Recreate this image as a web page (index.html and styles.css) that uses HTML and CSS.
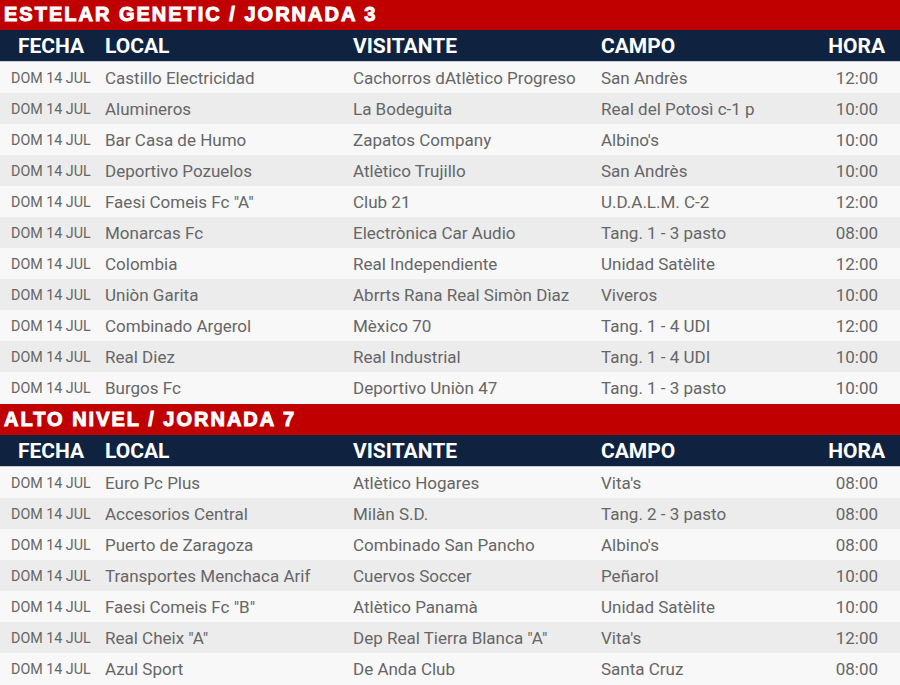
FILE: index.html
```html
<!DOCTYPE html>
<html lang="es">
<head>
<meta charset="utf-8">
<title>Jornadas</title>
<link rel="stylesheet" href="styles.css">
</head>
<body>
<section class="block">
  <h2 class="title">ESTELAR GENETIC / JORNADA 3</h2>
  <div class="row head"><span class="c1">FECHA</span><span>LOCAL</span><span>VISITANTE</span><span>CAMPO</span><span class="c5">HORA</span></div>
  <div class="row"><span class="c1">DOM 14 JUL</span><span>Castillo Electricidad</span><span>Cachorros dAtlètico Progreso</span><span>San Andrès</span><span class="c5">12:00</span></div>
  <div class="row"><span class="c1">DOM 14 JUL</span><span>Alumineros</span><span>La Bodeguita</span><span>Real del Potosì c-1 p</span><span class="c5">10:00</span></div>
  <div class="row"><span class="c1">DOM 14 JUL</span><span>Bar Casa de Humo</span><span>Zapatos Company</span><span>Albino's</span><span class="c5">10:00</span></div>
  <div class="row"><span class="c1">DOM 14 JUL</span><span>Deportivo Pozuelos</span><span>Atlètico Trujillo</span><span>San Andrès</span><span class="c5">10:00</span></div>
  <div class="row"><span class="c1">DOM 14 JUL</span><span>Faesi Comeis Fc "A"</span><span>Club 21</span><span>U.D.A.L.M. C-2</span><span class="c5">12:00</span></div>
  <div class="row"><span class="c1">DOM 14 JUL</span><span>Monarcas Fc</span><span>Electrònica Car Audio</span><span>Tang. 1 - 3 pasto</span><span class="c5">08:00</span></div>
  <div class="row"><span class="c1">DOM 14 JUL</span><span>Colombia</span><span>Real Independiente</span><span>Unidad Satèlite</span><span class="c5">12:00</span></div>
  <div class="row"><span class="c1">DOM 14 JUL</span><span>Uniòn Garita</span><span>Abrrts Rana Real Simòn Dìaz</span><span>Viveros</span><span class="c5">10:00</span></div>
  <div class="row"><span class="c1">DOM 14 JUL</span><span>Combinado Argerol</span><span>Mèxico 70</span><span>Tang. 1 - 4 UDI</span><span class="c5">12:00</span></div>
  <div class="row"><span class="c1">DOM 14 JUL</span><span>Real Diez</span><span>Real Industrial</span><span>Tang. 1 - 4 UDI</span><span class="c5">10:00</span></div>
  <div class="row"><span class="c1">DOM 14 JUL</span><span>Burgos Fc</span><span>Deportivo Uniòn 47</span><span>Tang. 1 - 3 pasto</span><span class="c5">10:00</span></div>
</section>
<section class="block">
  <h2 class="title">ALTO NIVEL / JORNADA 7</h2>
  <div class="row head"><span class="c1">FECHA</span><span>LOCAL</span><span>VISITANTE</span><span>CAMPO</span><span class="c5">HORA</span></div>
  <div class="row"><span class="c1">DOM 14 JUL</span><span>Euro Pc Plus</span><span>Atlètico Hogares</span><span>Vita's</span><span class="c5">08:00</span></div>
  <div class="row"><span class="c1">DOM 14 JUL</span><span>Accesorios Central</span><span>Milàn S.D.</span><span>Tang. 2 - 3 pasto</span><span class="c5">08:00</span></div>
  <div class="row"><span class="c1">DOM 14 JUL</span><span>Puerto de Zaragoza</span><span>Combinado San Pancho</span><span>Albino's</span><span class="c5">08:00</span></div>
  <div class="row"><span class="c1">DOM 14 JUL</span><span>Transportes Menchaca Arif</span><span>Cuervos Soccer</span><span>Peñarol</span><span class="c5">10:00</span></div>
  <div class="row"><span class="c1">DOM 14 JUL</span><span>Faesi Comeis Fc "B"</span><span>Atlètico Panamà</span><span>Unidad Satèlite</span><span class="c5">10:00</span></div>
  <div class="row"><span class="c1">DOM 14 JUL</span><span>Real Cheix "A"</span><span>Dep Real Tierra Blanca "A"</span><span>Vita's</span><span class="c5">12:00</span></div>
  <div class="row"><span class="c1">DOM 14 JUL</span><span>Azul Sport</span><span>De Anda Club</span><span>Santa Cruz</span><span class="c5">08:00</span></div>
</section>
</body>
</html>
```
FILE: styles.css
```css
* { box-sizing: border-box; }
html, body { margin: 0; padding: 0; background: #f8f8f8; }
body { width: 900px; font-family: Roboto, "Liberation Sans", sans-serif; }
.block { display: flex; flex-direction: column; }
.block + .block { margin-top: 1px; }
.title {
  margin: 0;
  height: 30px;
  background: #c00000;
  color: #fff;
  font-family: "Liberation Sans", Arial, sans-serif;
  font-weight: 700;
  font-size: 20px;
  line-height: 29px;
  padding-left: 4px;
  -webkit-text-stroke: 1px #fff;
  letter-spacing: 2px;
  white-space: nowrap;
}
.block + .block .title { height: 31px; line-height: 31px; }
.row {
  display: grid;
  grid-template-columns: 105px 248px 248px 1fr 80px;
  height: 31px;
  align-items: center;
  font-size: 17px;
  color: #666;
  background: #f8f8f8;
}
.row:nth-child(even) { background: #ececec; }
.row .c1 { padding-left: 11px; font-size: 14.3px; }
.row .c5 { text-align: right; padding-right: 22px; }
.row.head {
  background: #0f2341;
  color: #fff;
  font-weight: 700;
  font-size: 21px;
  border-bottom: 1px solid #c8ccd4;
  height: 32px;
}
.row.head .c1 { padding-left: 18px; font-size: 21px; }
.row.head .c5 { padding-right: 15px; }
```
